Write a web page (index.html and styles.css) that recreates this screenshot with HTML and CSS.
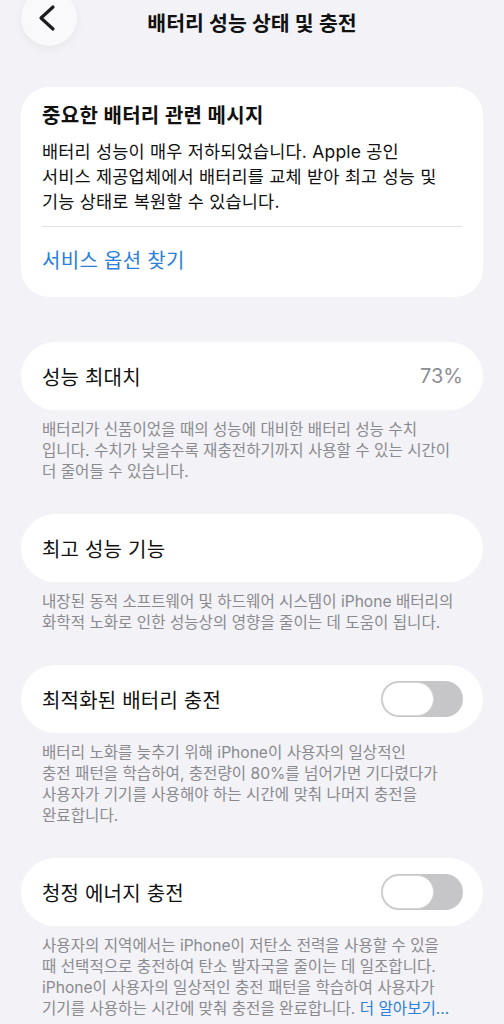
FILE: index.html
```html
<!DOCTYPE html>
<html lang="ko">
<head>
<meta charset="utf-8">
<title>배터리 성능 상태 및 충전</title>
<link rel="stylesheet" href="styles.css">
</head>
<body>
<div class="page">
  <header class="nav">
    <button class="back" aria-label="뒤로">
      <svg width="20" height="28" viewBox="0 0 20 28"><polyline points="15,3 3,14 15,25" fill="none" stroke="#1c1c1e" stroke-width="3.2" stroke-linecap="round" stroke-linejoin="round"/></svg>
    </button>
    <h1 class="nav-title">배터리 성능 상태 및 충전</h1>
    <span></span>
  </header>

  <section class="card message">
    <h2 class="msg-title">중요한 배터리 관련 메시지</h2>
    <p class="msg-body">배터리 성능이 매우 저하되었습니다. Apple 공인<br>서비스 제공업체에서 배터리를 교체 받아 최고 성능 및<br>기능 상태로 복원할 수 있습니다.</p>
    <div class="sep"></div>
    <a class="link">서비스 옵션 찾기</a>
  </section>

  <section class="group first">
    <div class="card row">
      <span class="row-label">성능 최대치</span>
      <span class="row-value">73%</span>
    </div>
    <p class="foot">배터리가 신품이었을 때의 성능에 대비한 배터리 성능 수치<br>입니다. 수치가 낮을수록 재충전하기까지 사용할 수 있는 시간이<br>더 줄어들 수 있습니다.</p>
  </section>

  <section class="group">
    <div class="card row">
      <span class="row-label">최고 성능 기능</span>
    </div>
    <p class="foot">내장된 동적 소프트웨어 및 하드웨어 시스템이 iPhone 배터리의<br>화학적 노화로 인한 성능상의 영향을 줄이는 데 도움이 됩니다.</p>
  </section>

  <section class="group">
    <div class="card row">
      <span class="row-label">최적화된 배터리 충전</span>
      <span class="toggle"><span class="knob"></span></span>
    </div>
    <p class="foot">배터리 노화를 늦추기 위해 iPhone이 사용자의 일상적인<br>충전 패턴을 학습하여, 충전량이 80%를 넘어가면 기다렸다가<br>사용자가 기기를 사용해야 하는 시간에 맞춰 나머지 충전을<br>완료합니다.</p>
  </section>

  <section class="group">
    <div class="card row">
      <span class="row-label">청정 에너지 충전</span>
      <span class="toggle"><span class="knob"></span></span>
    </div>
    <p class="foot">사용자의 지역에서는 iPhone이 저탄소 전력을 사용할 수 있을<br>때 선택적으로 충전하여 탄소 발자국을 줄이는 데 일조합니다.<br>iPhone이 사용자의 일상적인 충전 패턴을 학습하여 사용자가<br>기기를 사용하는 시간에 맞춰 충전을 완료합니다. <a class="more">더 알아보기...</a></p>
  </section>
</div>
</body>
</html>
```

FILE: styles.css
```css
* { box-sizing: border-box; }
html, body {
  margin: 0;
  padding: 0;
  background: #f2f2f7;
}
body {
  font-family: "Inter", "Noto Sans CJK KR", sans-serif;
  color: #000;
  overflow: hidden;
}
.page {
  width: 504px;
  height: 1024px;
  overflow: hidden;
}
.nav {
  display: grid;
  grid-template-columns: 77px 1fr 77px;
  align-items: center;
  height: 46px;
  padding-left: 21px;
  padding-right: 21px;
}
.back {
  width: 56px;
  height: 56px;
  margin-top: -10px;
  border: none;
  border-radius: 50%;
  background: #f9f9fb;
  box-shadow: 0 3px 10px rgba(0, 0, 0, 0.05);
  display: flex;
  align-items: center;
  justify-content: center;
  padding: 0 3px 0 0;
}
.nav-title {
  margin: 0;
  text-align: center;
  font-size: 20.5px;
  font-weight: 600;
  line-height: 24px;
  margin-top: 1px;
  letter-spacing: 0;
  color: #111;
}
.card {
  background: #fff;
  margin: 0 21px;
}
.message {
  margin-top: 41px;
  border-radius: 28px;
  padding: 16px 21px 23px;
}
.msg-title {
  margin: 0;
  font-size: 20px;
  line-height: 26px;
  font-weight: 600;
  letter-spacing: 0.3px;
  color: #111;
}
.msg-body {
  margin: 10px 0 0;
  font-size: 17.5px;
  line-height: 25px;
  letter-spacing: 0.2px;
  color: #111;
}
.sep {
  height: 1px;
  background: #e2e2e6;
  margin-top: 12px;
}
.link {
  display: block;
  margin-top: 22px;
  font-size: 20px;
  line-height: 25px;
  letter-spacing: 0.3px;
  color: #2a80dc;
}
.group { margin-top: 32px; }
.group.first { margin-top: 45px; }
.row {
  height: 68px;
  border-radius: 34px;
  padding: 0 20px 0 21px;
  display: flex;
  align-items: center;
  justify-content: space-between;
}
.row-label {
  font-size: 20px;
  letter-spacing: 0.2px;
  color: #111;
}
.row-value {
  font-size: 20px;
  color: #8e8e93;
}
.toggle {
  width: 82px;
  height: 36px;
  border-radius: 18px;
  background: #c6c6c9;
  padding: 1px;
  display: flex;
}
.knob {
  width: 52px;
  height: 34px;
  border-radius: 17px;
  background: #fff;
  border: 1.5px solid #d6d6d8;
}
.foot {
  margin: 9px 0 0;
  padding: 0 10px 0 42px;
  font-size: 15.6px;
  line-height: 21px;
  letter-spacing: 0;
  color: #8a8a8e;
  white-space: nowrap;
}
.more { color: #2a80dc; }
```
